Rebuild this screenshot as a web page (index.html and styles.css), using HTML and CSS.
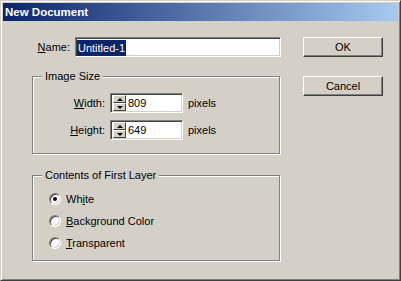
FILE: index.html
```html
<!DOCTYPE html>
<html lang="en">
<head>
    <meta charset="UTF-8">
    <title>New Document</title>
    <link rel="stylesheet" href="styles.css">
</head>
<body>
    <div class="window">
        <div class="titlebar">New Document</div>
        <div class="content">
            <div class="form">
                <div class="name-row">
                    <label class="name-label"><u>N</u>ame:</label>
                    <div class="textbox name-box"><span class="selected">Untitled-1</span></div>
                </div>

                <div class="group size-group">
                    <span class="legend">Image Size</span>
                    <div class="field-row">
                        <label class="field-label"><u>W</u>idth:</label>
                        <div class="textbox spin-box">
                            <span class="spinner">
                                <span class="spin-btn"><span class="arrow-up"></span></span>
                                <span class="spin-btn"><span class="arrow-down"></span></span>
                            </span>
                            <span class="value">809</span>
                        </div>
                        <span class="unit">pixels</span>
                    </div>
                    <div class="field-row">
                        <label class="field-label"><u>H</u>eight:</label>
                        <div class="textbox spin-box">
                            <span class="spinner">
                                <span class="spin-btn"><span class="arrow-up"></span></span>
                                <span class="spin-btn"><span class="arrow-down"></span></span>
                            </span>
                            <span class="value">649</span>
                        </div>
                        <span class="unit">pixels</span>
                    </div>
                </div>

                <div class="group layer-group">
                    <span class="legend">Contents of First Layer</span>
                    <div class="radio-row"><span class="radio checked"></span><span>Wh<u>i</u>te</span></div>
                    <div class="radio-row"><span class="radio"></span><span><u>B</u>ackground Color</span></div>
                    <div class="radio-row"><span class="radio"></span><span><u>T</u>ransparent</span></div>
                </div>
            </div>

            <div class="buttons">
                <button class="btn">OK</button>
                <button class="btn">Cancel</button>
            </div>
        </div>
    </div>
</body>
</html>
```

FILE: styles.css
```css
body {
    margin: 0;
    padding: 0;
    font-family: "Liberation Sans", Arial, sans-serif;
    font-size: 11px;
    color: #000;
    background-color: #d4d0c8;
}

.window {
    box-sizing: border-box;
    width: 401px;
    height: 281px;
    padding: 2px;
    background-color: #d4d0c8;
    border: 1px solid;
    border-color: #d4d0c8 #404040 #404040 #d4d0c8;
    box-shadow: inset 1px 1px 0 #fff, inset -1px -1px 0 #808080;
}

.titlebar {
    height: 18px;
    line-height: 18px;
    padding-left: 2px;
    color: #fff;
    font-weight: bold;
    font-size: 11.5px;
    background: linear-gradient(to right, #0a246a, #a6caf0);
}

.content {
    display: flex;
    padding: 16px 0 0 29px;
}

.form {
    width: 249px;
}

.name-row {
    display: flex;
    align-items: center;
    gap: 5px;
    height: 20px;
}

.name-label {
    width: 38px;
    text-align: right;
}

.textbox {
    box-sizing: border-box;
    height: 20px;
    background-color: #fff;
    border: 1px solid;
    border-color: #808080 #fff #fff #808080;
    box-shadow: inset 1px 1px 0 #404040, inset -1px -1px 0 #d4d0c8;
    padding: 2px;
}

.name-box {
    width: 206px;
}

.selected {
    display: inline-block;
    height: 16px;
    line-height: 16px;
    padding: 0 1px;
    margin-left: -1px;
    background-color: #0a246a;
    color: #fff;
}

.group {
    position: relative;
    box-sizing: border-box;
    width: 248px;
    border: 1px solid #808080;
    box-shadow: inset 1px 1px 0 #fff, 1px 1px 0 #fff;
}

.legend {
    position: absolute;
    top: -8px;
    left: 9px;
    padding: 0 3px;
    line-height: 14px;
    background-color: #d4d0c8;
}

.size-group {
    height: 78px;
    margin-top: 19px;
    padding: 16px 0 0 32px;
}

.field-row {
    display: flex;
    align-items: center;
    gap: 5px;
    height: 20px;
    margin-bottom: 7px;
}

.field-label {
    width: 40px;
    text-align: right;
}

.spin-box {
    display: flex;
    align-items: center;
    width: 73px;
    padding: 2px 0 2px 2px;
}

.spinner {
    display: flex;
    flex-direction: column;
    width: 13px;
    height: 16px;
    margin-right: 2px;
}

.spin-btn {
    box-sizing: border-box;
    display: flex;
    align-items: center;
    justify-content: center;
    height: 8px;
    background-color: #d4d0c8;
    border: 1px solid;
    border-color: #fff #404040 #404040 #fff;
}

.arrow-up {
    width: 0;
    height: 0;
    border-left: 3px solid transparent;
    border-right: 3px solid transparent;
    border-bottom: 3px solid #000;
}

.arrow-down {
    width: 0;
    height: 0;
    border-left: 3px solid transparent;
    border-right: 3px solid transparent;
    border-top: 3px solid #000;
}

.value {
    line-height: 16px;
}

.layer-group {
    height: 86px;
    margin-top: 21px;
    padding: 12px 0 0 16px;
}

.radio-row {
    display: flex;
    align-items: center;
    gap: 5px;
    height: 22px;
}

.radio {
    position: relative;
    box-sizing: border-box;
    width: 12px;
    height: 12px;
    border-radius: 50%;
    background-color: #fff;
    border: 1px solid;
    border-color: #808080 #fff #fff #808080;
    box-shadow: inset 1px 1px 0 #404040, inset -1px -1px 0 #d4d0c8;
}

.radio.checked::after {
    content: "";
    position: absolute;
    top: 3px;
    left: 3px;
    width: 4px;
    height: 4px;
    border-radius: 50%;
    background-color: #000;
}

.buttons {
    display: flex;
    flex-direction: column;
    gap: 19px;
    margin-left: 22px;
}

.btn {
    box-sizing: border-box;
    width: 80px;
    height: 20px;
    padding: 0;
    font-family: "Liberation Sans", Arial, sans-serif;
    font-size: 11px;
    color: #000;
    background-color: #d4d0c8;
    border: 1px solid;
    border-color: #fff #404040 #404040 #fff;
    box-shadow: inset -1px -1px 0 #808080;
}
```
